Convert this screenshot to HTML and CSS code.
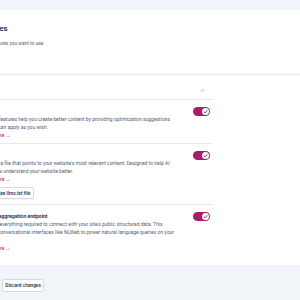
FILE: index.html
```html
<!DOCTYPE html>
<html lang="en">
<head>
  <meta charset="UTF-8" />
  <meta name="viewport" content="width=device-width, initial-scale=1.0"/>
  <title>Site features</title>
  <link rel="stylesheet" href="styles.css">
</head>
<body>

  <div class="shell">
    <header class="page-head">
      <h1>Site features</h1>
      <p>Tell us which features you want to use.</p>
    </header>

    <section class="card">
      <div class="card-head">
        <h2>AI tools</h2>
        <svg class="chevron" viewBox="0 0 10 6" aria-hidden="true">
          <path d="M1 5 L5 1 L9 5" />
        </svg>
      </div>

      <div class="feature">
        <div class="feature-text">
          <h3>Yoast AI</h3>
          <p>Yoast AI features help you create better content by providing optimization suggestions that you can apply as you wish.</p>
          <a href="#" class="more">Learn more &rarr;</a>
        </div>
        <span class="toggle on"><span class="knob"><svg viewBox="0 0 10 10"><path d="M2.5 5.2 L4.3 7 L7.6 3.2" /></svg></span></span>
      </div>

      <div class="feature">
        <div class="feature-text">
          <h3>llms.txt</h3>
          <p>Generate a file that points to your website's most relevant content. Designed to help AI assistants understand your website better.</p>
          <a href="#" class="more">Learn more &rarr;</a>
          <button class="btn small">Customize llms.txt file</button>
        </div>
        <span class="toggle on"><span class="knob"><svg viewBox="0 0 10 10"><path d="M2.5 5.2 L4.3 7 L7.6 3.2" /></svg></span></span>
      </div>

      <div class="feature">
        <div class="feature-text">
          <h3>Schema aggregation endpoint</h3>
          <p>Provides everything required to connect with your site's public structured data. This enables conversational interfaces like NLWeb to power natural language queries on your site.</p>
          <a href="#" class="more">Learn more &rarr;</a>
        </div>
        <span class="toggle on"><span class="knob"><svg viewBox="0 0 10 10"><path d="M2.5 5.2 L4.3 7 L7.6 3.2" /></svg></span></span>
      </div>
    </section>

    <footer class="actions">
      <button class="btn primary">Save changes</button>
      <button class="btn">Discard changes</button>
    </footer>
  </div>

</body>
</html>
```

FILE: styles.css
```css
* {
  box-sizing: border-box;
  margin: 0;
  padding: 0;
}

body {
  font-family: Roboto, 'Segoe UI', sans-serif;
  font-size: 5px;
  background: #f1f5f9;
  color: #556273;
  overflow: hidden;
}

.shell {
  margin-left: -40px;
  width: calc(100% + 40px);
  padding-top: 10px;
}

.page-head {
  background: #fff;
  padding: 14px 2px 26px;
  height: 63px;
}

.page-head h1 {
  font-size: 8px;
  line-height: 10px;
  font-weight: 600;
  color: #1e293b;
  margin-bottom: 5.5px;
}

.page-head p {
  font-size: 4.8px;
  line-height: 7px;
}

.card {
  background: #fff;
  margin-top: 3px;
  padding: 0 19px 13px;
}

.card-head,
.feature {
  max-width: 233px;
}

.card-head {
  display: flex;
  justify-content: space-between;
  align-items: center;
  height: 24px;
  padding: 5px 7px 0 0;
  border-bottom: 1px solid #e5e9ef;
}

.card-head h2 {
  font-size: 5px;
  font-weight: 600;
  color: #1e293b;
}

.chevron {
  width: 5px;
  height: 3px;
  fill: none;
  stroke: #8a94a3;
  stroke-width: 1.2;
}

.feature {
  display: flex;
  gap: 14px;
  padding: 7px 2px 4px 0;
  border-bottom: 1px solid #e5e9ef;
}

.feature:last-child {
  border-bottom: none;
  padding-bottom: 0;
}

.feature-text {
  flex: 1;
}

.feature-text h3 {
  font-size: 5.1px;
  line-height: 8px;
  font-weight: 600;
  color: #1e293b;
}

.feature-text p {
  font-size: 5px;
  line-height: 8px;
}

.more {
  display: block;
  font-size: 5px;
  line-height: 8px;
  color: #a61e69;
  text-decoration: none;
}

.toggle {
  flex: 0 0 17px;
  height: 9px;
  border-radius: 999px;
  background: #a61e69;
  display: flex;
  align-items: center;
  justify-content: flex-end;
  padding: 1px;
}

.knob {
  width: 7px;
  height: 7px;
  border-radius: 50%;
  background: #fff;
  display: flex;
}

.knob svg {
  width: 7px;
  height: 7px;
  fill: none;
  stroke: #5b2145;
  stroke-width: 1.2;
}

.btn {
  font-family: inherit;
  font-size: 4.8px;
  font-weight: 500;
  line-height: 7px;
  padding: 2px 2.5px;
  background: #fff;
  color: #1e293b;
  border: 1px solid #d5dae1;
  border-radius: 2px;
  box-shadow: 0 1px 1px rgba(0, 0, 0, 0.04);
}

.btn.small {
  display: block;
  margin: 4px 0 1px;
  padding: 1.5px 2.5px;
}

.actions {
  display: flex;
  gap: 2px;
  padding: 14px 0 0 3px;
}

.btn.primary {
  background: #a61e69;
  border-color: #a61e69;
  color: #fff;
}
```
